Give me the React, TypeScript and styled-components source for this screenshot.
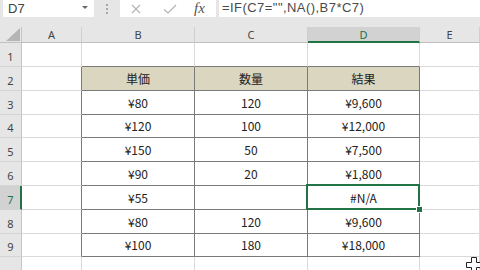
import React from "react";
import styled, { createGlobalStyle, css } from "styled-components";

const GlobalStyle = createGlobalStyle`
  html, body { margin: 0; padding: 0; background: #ffffff; }
  body { width: 480px; height: 270px; overflow: hidden; }
`;

const GREEN = "#217346";
const HEADER_BG = "#e6e6e6";
const GRID = "#dadada";
const DARK = "#7a7a7a";

const Page = styled.div`
  position: relative;
  width: 480px;
  height: 270px;
  overflow: hidden;
  background: #ffffff;
  display: flex;
  flex-direction: column;
`;

const FormulaBar = styled.div`
  height: 27px;
  flex: 0 0 27px;
  display: flex;
  align-items: flex-start;
  background: ${HEADER_BG};
  padding-left: 3px;
  box-sizing: border-box;
`;

const NameBox = styled.div`
  width: 91px;
  height: 17px;
  background: #ffffff;
  display: flex;
  align-items: center;
  justify-content: space-between;
  padding: 0 6px 0 5px;
  box-sizing: border-box;
`;

const NameText = styled.span`
  font-family: "Liberation Sans", Arial, sans-serif;
  font-size: 13px;
  line-height: 17px;
  color: #444444;
`;

const DropArrow = styled.span`
  width: 0;
  height: 0;
  border-left: 3px solid transparent;
  border-right: 3px solid transparent;
  border-top: 3px solid #666666;
  margin-top: -3px;
`;

const DotsArea = styled.div`
  width: 26px;
  height: 17px;
  display: flex;
  flex-direction: column;
  align-items: center;
  justify-content: center;
  gap: 2px;
`;

const Dot = styled.span`
  width: 2px;
  height: 2px;
  background: #a8a8a8;
`;

const ButtonsBox = styled.div`
  width: 96px;
  height: 17px;
  background: #ffffff;
  display: flex;
  align-items: center;
  padding-left: 11px;
  box-sizing: border-box;
`;

const IconSlot = styled.span`
  width: 32px;
  height: 17px;
  display: flex;
  align-items: center;
  justify-content: flex-start;
`;

const Fx = styled.span`
  font-family: "Liberation Serif", "Times New Roman", serif;
  font-style: italic;
  font-size: 15px;
  line-height: 17px;
  color: #555555;
  margin-left: -1px;
`;

const FormulaInput = styled.div`
  flex: 1;
  margin-left: 3px;
  height: 17px;
  background: #ffffff;
  padding-left: 3px;
  font-family: "Liberation Sans", Arial, sans-serif;
  font-size: 13px;
  letter-spacing: 0.45px;
  line-height: 16px;
  color: #4a4a4a;
  white-space: nowrap;
  overflow: hidden;
`;

const Sheet = styled.div`
  display: grid;
  grid-template-columns: 22px 60px 113px 113px 112px 1fr;
  grid-template-rows: 16px 24px 24px 24px 23px 24px 24px 24px 24px 23px 24px;
`;

const headerFont = css`
  font-family: "Noto Sans", "Open Sans", sans-serif;
  font-size: 11px;
  color: #444444;
`;

const Corner = styled.div`
  background: ${HEADER_BG};
  border-right: 1px solid #c6c6c6;
  border-bottom: 1px solid #c0c0c0;
  box-sizing: border-box;
  display: flex;
  align-items: flex-end;
  justify-content: flex-end;
  padding: 0 1px 1px 0;
`;

const CornerTriangle = styled.span`
  width: 14px;
  height: 13px;
  background: #b5b5b5;
  clip-path: polygon(100% 0, 100% 100%, 0 100%);
`;

const ColHeader = styled.div<{ $active?: boolean }>`
  ${headerFont};
  background: ${(p) => (p.$active ? "#d2d2d2" : HEADER_BG)};
  color: ${(p) => (p.$active ? GREEN : "#444444")};
  border-right: 1px solid #cfcfcf;
  border-bottom: ${(p) => (p.$active ? `2px solid ${GREEN}` : "1px solid #c0c0c0")};
  box-sizing: border-box;
  display: flex;
  align-items: center;
  justify-content: center;
  line-height: 14px;
  padding-top: ${(p) => (p.$active ? "1px" : "0")};
`;

const RowHeader = styled.div<{ $active?: boolean }>`
  ${headerFont};
  background: ${(p) => (p.$active ? "#d2d2d2" : HEADER_BG)};
  color: ${(p) => (p.$active ? GREEN : "#444444")};
  border-right: ${(p) => (p.$active ? `2px solid ${GREEN}` : "1px solid #c6c6c6")};
  border-bottom: 1px solid #d4d4d4;
  box-sizing: border-box;
  display: flex;
  align-items: flex-end;
  justify-content: center;
  padding-bottom: 2px;
  padding-left: ${(p) => (p.$active ? "1px" : "0")};
  line-height: 15px;
`;

const Cell = styled.div<{
  $rightDark?: boolean;
  $bottomDark?: boolean;
  $head?: boolean;
  $selected?: boolean;
}>`
  box-sizing: border-box;
  background: ${(p) => (p.$head ? "#dbd6bf" : "#ffffff")};
  border-right: 1px solid ${(p) => (p.$rightDark ? DARK : GRID)};
  border-bottom: 1px solid ${(p) => (p.$bottomDark ? DARK : GRID)};
  display: flex;
  align-items: flex-end;
  justify-content: center;
  padding-bottom: 3px;
  font-family: "Noto Sans CJK JP", "Noto Sans", sans-serif;
  font-size: 12px;
  line-height: 17px;
  color: #222222;
  white-space: nowrap;
  ${(p) =>
    p.$selected &&
    css`
      position: relative;
      &::after {
        content: "";
        position: absolute;
        top: -2px;
        left: -2px;
        right: -1px;
        bottom: -1px;
        border: 2px solid ${GREEN};
        z-index: 2;
      }
      &::before {
        content: "";
        position: absolute;
        right: -4px;
        bottom: -4px;
        width: 5px;
        height: 5px;
        background: ${GREEN};
        border: 1px solid #ffffff;
        z-index: 3;
      }
    `}
`;

const Cursor = styled.svg`
  position: absolute;
  left: 466px;
  top: 257px;
  z-index: 5;
`;

const COLS = ["A", "B", "C", "D", "E"];
const DATA: Record<number, string[]> = {
  2: ["", "単価", "数量", "結果", ""],
  3: ["", "¥80", "120", "¥9,600", ""],
  4: ["", "¥120", "100", "¥12,000", ""],
  5: ["", "¥150", "50", "¥7,500", ""],
  6: ["", "¥90", "20", "¥1,800", ""],
  7: ["", "¥55", "", "#N/A", ""],
  8: ["", "¥80", "120", "¥9,600", ""],
  9: ["", "¥100", "180", "¥18,000", ""],
};

export default function App() {
  const rows = Array.from({ length: 10 }, (_, i) => i + 1);
  return (
    <Page>
      <GlobalStyle />
      <FormulaBar>
        <NameBox>
          <NameText>D7</NameText>
          <DropArrow />
        </NameBox>
        <DotsArea>
          <Dot />
          <Dot />
          <Dot />
        </DotsArea>
        <ButtonsBox>
          <IconSlot>
            <svg width="10" height="10" viewBox="0 0 10 10">
              <path d="M1 1 L9 9 M9 1 L1 9" stroke="#b3b3b3" strokeWidth="1.1" fill="none" />
            </svg>
          </IconSlot>
          <IconSlot>
            <svg width="14" height="10" viewBox="0 0 14 10">
              <path d="M1 5.5 L5 9 L13 1" stroke="#b3b3b3" strokeWidth="1.1" fill="none" />
            </svg>
          </IconSlot>
          <Fx>fx</Fx>
        </ButtonsBox>
        <FormulaInput>=IF(C7="",NA(),B7*C7)</FormulaInput>
      </FormulaBar>
      <Sheet>
        <Corner>
          <CornerTriangle />
        </Corner>
        {COLS.map((c) => (
          <ColHeader key={c} $active={c === "D"}>
            {c}
          </ColHeader>
        ))}
        {rows.map((r) => (
          <React.Fragment key={r}>
            <RowHeader $active={r === 7}>{r <= 9 ? r : ""}</RowHeader>
            {COLS.map((c, ci) => {
              const v = DATA[r]?.[ci] ?? "";
              return (
                <Cell
                  key={c}
                  $rightDark={r >= 2 && r <= 9 && ci <= 3}
                  $bottomDark={r >= 1 && r <= 9 && ci >= 1 && ci <= 3}
                  $head={r === 2 && ci >= 1 && ci <= 3}
                  $selected={r === 7 && c === "D"}
                >
                  {v}
                </Cell>
              );
            })}
          </React.Fragment>
        ))}
      </Sheet>
      <Cursor width="16" height="16" viewBox="0 0 16 16">
        <path
          d="M5.5 0.5 H10.5 V5.5 H15.5 V10.5 H10.5 V15.5 H5.5 V10.5 H0.5 V5.5 H5.5 Z"
          fill="#ffffff"
          stroke="#222222"
          strokeWidth="1"
        />
      </Cursor>
    </Page>
  );
}
